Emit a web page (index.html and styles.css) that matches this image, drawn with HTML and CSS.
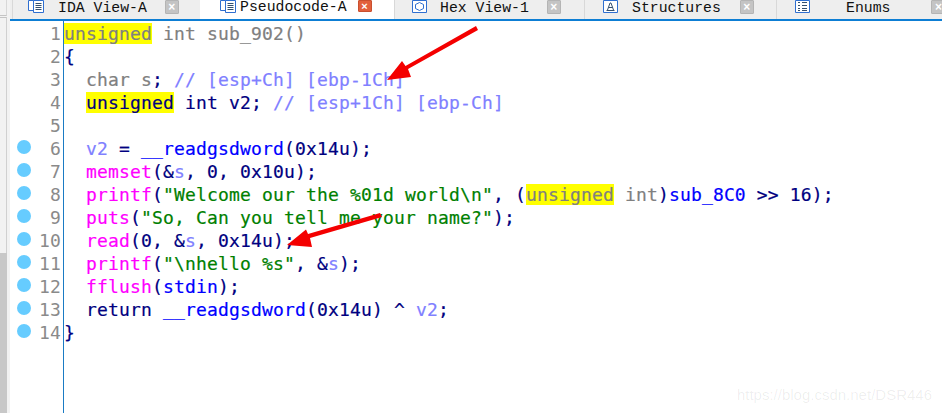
FILE: index.html
```html
<!DOCTYPE html>
<html lang="en">
<head>
<meta charset="utf-8">
<title>Pseudocode-A</title>
<link rel="stylesheet" href="styles.css">
</head>
<body>
<div class="app">
  <aside class="rail">
    <div class="rail-a"></div>
    <div class="rail-b"></div>
    <div class="rail-c"></div>
  </aside>
  <div class="main">
    <nav class="tabs">
      <div class="tab t1">
        <svg class="ico" viewBox="0 0 16 14"><path class="b" d="M.5.500h5v10h-5z"/><path class="w" d="M5.500.500h10v12h-10z"/><path class="g" d="M7.500 3.500h6M7.500 5.500h6M7.500 7.500h6M7.500 9.500h6"/></svg>
        <span class="lbl">IDA View-A</span><span class="x">×</span>
      </div>
      <div class="tab active t2">
        <svg class="ico" viewBox="0 0 16 14"><path class="b" d="M.5.500h5v10h-5z"/><path class="w" d="M5.500.500h10v12h-10z"/><path class="g" d="M7.500 3.500h6M7.500 5.500h6M7.500 7.500h6M7.500 9.500h6"/></svg>
        <span class="lbl">Pseudocode-A</span><span class="x red">×</span>
      </div>
      <div class="tab t3">
        <svg class="ico" viewBox="0 0 16 14"><path class="w" d="M.5.500h14v12H.5z"/><path class="b" d="M7.500 2.500l4 2v4l-4 2-4-2v-4z"/></svg>
        <span class="lbl">Hex View-1</span><span class="x">×</span>
      </div>
      <div class="tab t4">
        <svg class="ico" viewBox="0 0 16 14"><path class="w" d="M.5.500h14v12H.5z"/><path class="g" d="M4.500 10L7 3h1l2.500 7M5.500 7.500h4M3.500 10.500h8"/></svg>
        <span class="lbl">Structures</span><span class="x">×</span>
      </div>
      <div class="tab t5">
        <svg class="ico" viewBox="0 0 16 14"><path class="w" d="M.5.500h14v12H.5z"/><path class="g" d="M3 2.500h2M7 2.500h5M3 5.500h2M7 5.500h5M3 8.500h2M7 8.500h5M3 10.500h2M7 10.500h5"/></svg>
        <span class="lbl">Enums</span><span class="x">×</span>
      </div>
    </nav>
    <div class="view">
      <ol class="gutter">
        <li>1</li><li>2</li><li>3</li><li>4</li><li>5</li>
        <li class="bp">6</li><li class="bp">7</li><li class="bp">8</li><li class="bp">9</li><li class="bp">10</li>
        <li class="bp">11</li><li class="bp">12</li><li class="bp">13</li><li class="bp">14</li>
      </ol>
      <pre class="code"><span class="hl k">unsigned</span><span class="k"> int sub_902()</span>
<span class="n">{</span>
<span class="k">  char s</span><span class="n">; </span><span class="c">// [esp+Ch] [ebp-1Ch]</span>
  <span class="hl n">unsigned</span><span class="n"> int v2; </span><span class="c">// [esp+1Ch] [ebp-Ch]</span>

  <span class="v">v2</span><span class="n"> = </span><span class="f">__readgsdword</span><span class="n">(0x14u);</span>
  <span class="m">memset</span><span class="n">(&amp;</span><span class="v">s</span><span class="n">, 0, 0x10u);</span>
  <span class="m">printf</span><span class="n">(</span><span class="s">"Welcome our the %01d world\n"</span><span class="n">, (</span><span class="hl k">unsigned</span><span class="k"> int</span><span class="n">)</span><span class="f">sub_8C0</span><span class="n"> &gt;&gt; 16);</span>
  <span class="m">puts</span><span class="n">(</span><span class="s">"So, Can you tell me your name?"</span><span class="n">);</span>
  <span class="m">read</span><span class="n">(0, &amp;</span><span class="v">s</span><span class="n">, 0x14u);</span>
  <span class="m">printf</span><span class="n">(</span><span class="s">"\nhello %s"</span><span class="n">, &amp;</span><span class="v">s</span><span class="n">);</span>
  <span class="m">fflush</span><span class="n">(</span><span class="f">stdin</span><span class="n">);</span>
  <span class="n">return </span><span class="f">__readgsdword</span><span class="n">(0x14u) ^ </span><span class="v">v2</span><span class="n">;</span>
<span class="n">}</span></pre>
      <svg class="arrows" viewBox="0 0 942 413">
        <path class="arrow" d="M478 30L408 69L411 77L387 80L402 61L405.500 66L476 26z"/>
        <path class="arrow" d="M382 217L310 238L312 247L287 245L306 229.500L308 234L380 213z"/>
      </svg>
      <div class="mark">https://blog.csdn.net/DSR446</div>
    </div>
  </div>
</div>
</body>
</html>
```
FILE: styles.css
```css
* { box-sizing: border-box; }
html, body { margin: 0; padding: 0; }
body { width: 942px; height: 413px; overflow: hidden; background: #fff; }
.app { display: flex; width: 942px; height: 413px; }
.rail { width: 10px; flex: none; display: flex; flex-direction: column; background: #f2f2f2; }
.rail-a { height: 16px; width: 7px; flex: none; border-bottom: 1px solid #c4c4c4; border-right: 1px solid #d8d8d8; }
.rail-b { height: 236px; width: 7px; flex: none; margin-top: 1px; border-top: 1px solid #c4c4c4; border-right: 1px solid #d0d0d0; }
.rail-c { flex: 1; width: 7px; background: #c8c8c8; }
.main { flex: 1; display: flex; flex-direction: column; min-width: 0; }
.tabs { display: flex; height: 21px; flex: none; padding-left: 2px; background: #eeeeee; border-bottom: 2px solid #0d7ed4; font-family: "Liberation Mono", monospace; font-size: 14.8px; color: #111; }
.tab { display: flex; align-items: flex-start; height: 19px; border-left: 1px solid #d8d8d8; flex: none; }
.tab.active { background: #fff; height: 19px; border-left: 0; border-right: 1px solid #d8d8d8; }
.t1 { width: 188px; padding-left: 15px; }
.t2 { width: 195px; padding-left: 20px; }
.t3 { width: 189px; padding-left: 17px; border-left: 0; }
.t4 { width: 192px; padding-left: 18px; }
.t5 { flex: 1; padding-left: 18px; }
.ico { width: 16px; height: 14px; flex: none; fill: none; }
.ico .b { stroke: #2f6fd0; fill: #fff; }
.ico .w { stroke: #2f6fd0; fill: #fff; }
.ico .g { stroke: #34506e; }
.lbl { white-space: pre; line-height: 16px; }
.t1 .lbl { margin-left: 14px; }
.t2 .lbl { margin-left: 4px; line-height: 14px; }
.t3 .lbl { margin-left: 12px; }
.t4 .lbl { margin-left: 13px; }
.t5 .lbl { margin-left: 35px; }
.x { display: flex; align-items: center; justify-content: center; width: 14px; height: 14px; flex: none; background: #c4c4c4; color: #fff; font: bold 12px/12px "Liberation Sans", sans-serif; border: 1px solid #b4b4b4; border-radius: 1px; }
.t1 .x { margin-left: 18px; }
.t2 .x { margin-left: 11px; height: 12px; background: #e2603c; border-color: #c9502f; font-size: 11px; line-height: 10px; }
.t3 .x { margin-left: 18px; }
.t4 .x { margin-left: 19px; }
.t5 .x { margin-left: 41px; }
.view { position: relative; flex: 1; display: flex; min-height: 0; }
.gutter { list-style: none; margin: 0; padding: 1px 0 0; width: 54px; flex: none; border-right: 1px solid #1a7bc4; font: 18px/23px "DejaVu Sans Mono", monospace; letter-spacing: .16px; color: #8a8a8a; text-align: right; }
.gutter li { position: relative; height: 23px; padding-right: 2px; }
.gutter .bp::before { content: ""; position: absolute; left: 7px; top: 3px; width: 14px; height: 14px; border-radius: 50%; background: #66ccff; }
.code { margin: 0; padding-top: 1px; font: 18px/23px "DejaVu Sans Mono", monospace; letter-spacing: .16px; color: #000080; white-space: pre; -webkit-text-stroke: .2px; }
.hl { background: #ffff00; }
.k { color: #808080; }
.n { color: #000080; }
.c { color: #8080ff; }
.v { color: #8080ff; }
.f { color: #0000ff; }
.m { color: #ff00ff; }
.s { color: #008000; }
.arrows { position: absolute; left: -10px; top: -21px; width: 942px; height: 413px; pointer-events: none; }
.arrow { fill: #f40000; }
.mark { position: absolute; right: 10px; bottom: 9px; font: 15px/18px "Liberation Sans", sans-serif; color: rgba(0,0,0,.07); }
```
